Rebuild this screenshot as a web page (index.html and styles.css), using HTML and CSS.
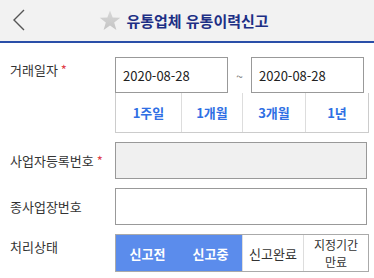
FILE: index.html
```html
<!DOCTYPE html>
<html lang="ko">
<head>
<meta charset="utf-8">
<link rel="stylesheet" href="styles.css">
</head>
<body>
<header class="topbar">
  <span class="back">
    <svg width="14" height="22" viewBox="0 0 14 22"><path d="M12 1 L2 11 L12 21" fill="none" stroke="#555" stroke-width="1.4"/></svg>
  </span>
  <h1 class="title">
    <svg class="star" width="22" height="21" viewBox="0 0 24 23"><defs><linearGradient id="g" x1="0" y1="0" x2="0" y2="1"><stop offset="0" stop-color="#d8d8d8"/><stop offset="1" stop-color="#c4c4c4"/></linearGradient></defs><path d="M12 0.5 L14.9 8.2 L23.3 8.5 L16.6 13.6 L19 21.8 L12 17 L5 21.8 L7.4 13.6 L0.7 8.5 L9.1 8.2 Z" fill="url(#g)"/></svg>
    유통업체 유통이력신고
  </h1>
</header>
<main class="form">
  <div class="row">
    <div class="label">거래일자<span class="req">*</span></div>
    <div class="field">
      <div class="dates">
        <div class="input">2020-08-28</div>
        <span class="tilde">~</span>
        <div class="input">2020-08-28</div>
      </div>
      <div class="periods">
        <span>1주일</span><span>1개월</span><span>3개월</span><span>1년</span>
      </div>
    </div>
  </div>
  <div class="row">
    <div class="label mid">사업자등록번호<span class="req">*</span></div>
    <div class="field"><div class="box gray"></div></div>
  </div>
  <div class="row">
    <div class="label mid">종사업장번호</div>
    <div class="field"><div class="box"></div></div>
  </div>
  <div class="row">
    <div class="label">처리상태</div>
    <div class="field">
      <div class="status">
        <span class="on">신고전</span><span class="on">신고중</span><span>신고완료</span><span class="two"><em>지정기간</em><em>만료</em></span>
      </div>
    </div>
  </div>
</main>
</body>
</html>
```
FILE: styles.css
```css
* { box-sizing: border-box; }
html, body { margin: 0; padding: 0; background: #fff; }
body {
  width: 374px;
  height: 278px;
  overflow: hidden;
  font-family: "Noto Sans CJK KR", "Noto Sans", sans-serif;
  color: #333;
}
.topbar {
  height: 43px;
  background: #f2f2f2;
  border-bottom: 2px solid #2a4ea8;
  display: flex;
  align-items: center;
  position: relative;
}
.back {
  position: absolute;
  left: 12px;
  top: 9px;
  display: flex;
}
.title {
  margin: 0 auto;
  display: flex;
  align-items: center;
  gap: 3px;
  font-size: 15px;
  font-weight: 700;
  color: #1d2f85;
  padding-right: 6px;
}
.star { margin-right: 2px; }
.form {
  padding: 14px 7px 0 10px;
  display: flex;
  flex-direction: column;
  gap: 9px;
}
.row {
  display: grid;
  grid-template-columns: 105px 1fr;
}
.label {
  font-size: 13px;
  color: #333;
  padding-top: 4px;
  line-height: 18px;
  white-space: nowrap;
}
.label.mid { align-self: center; padding-top: 0; }
.req { color: #e0404a; margin-left: 3px; font-size: 13px; }
.field { display: flex; flex-direction: column; }
.dates {
  display: flex;
  align-items: center;
  width: 249px;
}
.input {
  width: 113px;
  height: 36px;
  border: 1px solid #999;
  font-size: 13px;
  color: #222;
  padding-left: 7px;
  display: flex;
  align-items: center;
}
.tilde {
  width: 23px;
  text-align: center;
  font-size: 12px;
  color: #777;
}
.periods {
  display: grid;
  grid-template-columns: 65px 61px 63px 63px;
  height: 40px;
  border: 1px solid #ccc;
  border-top: 0;
}
.periods span {
  display: flex;
  align-items: center;
  justify-content: center;
  font-size: 13px;
  font-weight: 700;
  color: #2f6fe4;
  border-left: 1px solid #ddd;
}
.periods span:first-child { border-left: 0; }
.box {
  height: 37px;
  border: 1px solid #999;
  background: #fff;
}
.box.gray { background: #f0f0f0; }
.status {
  display: grid;
  grid-template-columns: 63px 63px 61px 65px;
  height: 38px;
  border: 1px solid #aaa;
}
.status span {
  display: flex;
  align-items: center;
  justify-content: center;
  text-align: center;
  font-size: 13px;
  color: #333;
  border-left: 1px solid #ddd;
}
.status span:first-child { border-left: 0; }
.status span.on {
  background: #5b8cec;
  color: #fff;
  font-weight: 700;
  border-left: 0;
}
.status span.two {
  flex-direction: column;
}
.status span.two em {
  font-style: normal;
  display: block;
  font-size: 12px;
  line-height: 17.5px;
  height: 17.5px;
}
```
